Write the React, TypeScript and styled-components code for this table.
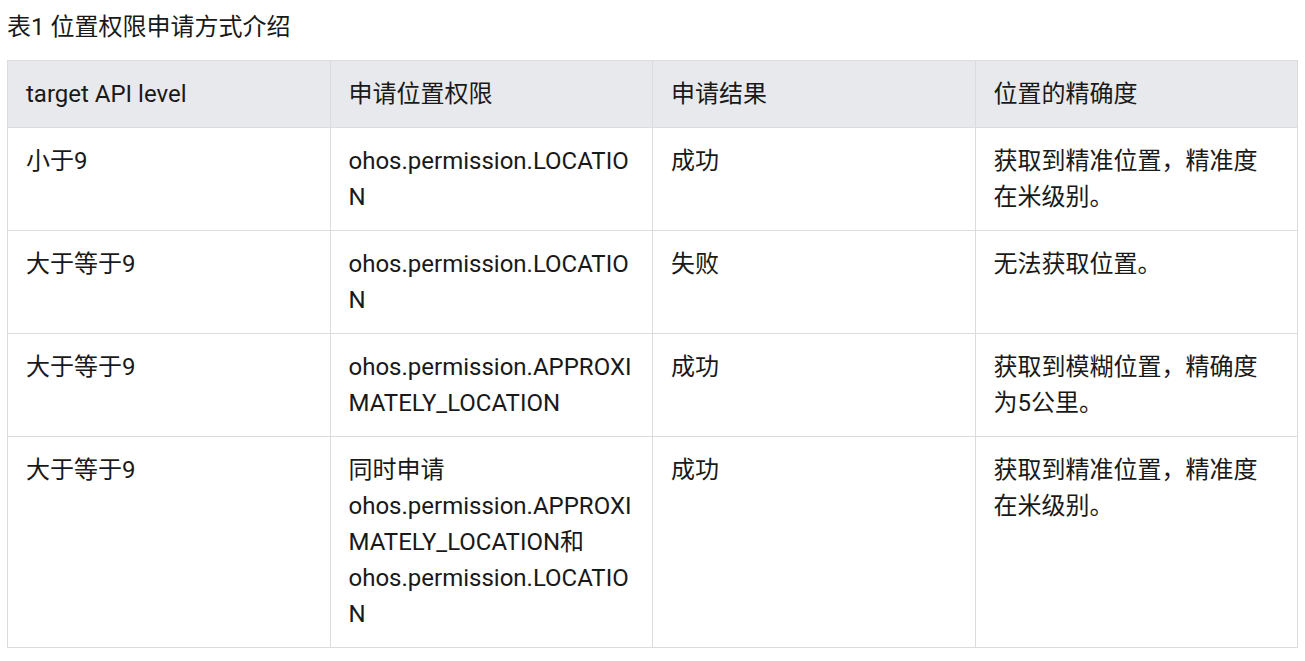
import React from 'react';
import styled, { createGlobalStyle } from 'styled-components';

const GlobalStyle = createGlobalStyle`
    html, body {
        margin: 0;
        padding: 0;
        background: #ffffff;
    }

    body {
        font-family: Roboto, "Noto Sans CJK SC", sans-serif;
        color: #191919;
    }
`;

const Page = styled.div`
    padding: 9px 7px 0;
`;

const Caption = styled.p`
    margin: 0 0 15px;
    font-size: 24px;
    line-height: 36px;
    color: #191919;
`;

const Table = styled.table`
    width: 100%;
    table-layout: fixed;
    border-collapse: collapse;
    font-size: 24px;
    line-height: 36px;
`;

const HeadCell = styled.th`
    background: #e8e9ec;
    border: 1px solid #dcdcdc;
    padding: 15px 18px;
    text-align: left;
    font-weight: 400;
    vertical-align: top;
`;

const Cell = styled.td`
    border: 1px solid #dcdcdc;
    padding: 15px 18px;
    vertical-align: top;
    overflow-wrap: break-word;
    word-wrap: break-word;
`;

type Row = {
    level: string;
    permission: string;
    result: string;
    accuracy: string;
};

const rows: Row[] = [
    {
        level: '小于9',
        permission: 'ohos.permission.LOCATION',
        result: '成功',
        accuracy: '获取到精准位置，精准度在米级别。',
    },
    {
        level: '大于等于9',
        permission: 'ohos.permission.LOCATION',
        result: '失败',
        accuracy: '无法获取位置。',
    },
    {
        level: '大于等于9',
        permission: 'ohos.permission.APPROXIMATELY_LOCATION',
        result: '成功',
        accuracy: '获取到模糊位置，精确度为5公里。',
    },
    {
        level: '大于等于9',
        permission: '同时申请ohos.permission.APPROXIMATELY_LOCATION和ohos.permission.LOCATION',
        result: '成功',
        accuracy: '获取到精准位置，精准度在米级别。',
    },
];

const App = () => {
    return (
        <Page>
            <GlobalStyle />
            <Caption>表1 位置权限申请方式介绍</Caption>
            <Table>
                <thead>
                    <tr>
                        <HeadCell>target API level</HeadCell>
                        <HeadCell>申请位置权限</HeadCell>
                        <HeadCell>申请结果</HeadCell>
                        <HeadCell>位置的精确度</HeadCell>
                    </tr>
                </thead>
                <tbody>
                    {rows.map((row, i) => (
                        <tr key={i}>
                            <Cell>{row.level}</Cell>
                            <Cell>{row.permission}</Cell>
                            <Cell>{row.result}</Cell>
                            <Cell>{row.accuracy}</Cell>
                        </tr>
                    ))}
                </tbody>
            </Table>
        </Page>
    );
};

export default App;
